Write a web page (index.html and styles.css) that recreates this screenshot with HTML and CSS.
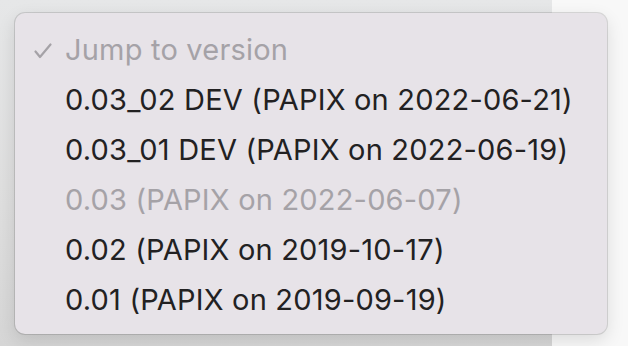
FILE: index.html
```html
<!DOCTYPE html>
<html lang="en">
<head>
  <meta charset="UTF-8">
  <title>Jump to version</title>
  <link rel="stylesheet" href="styles.css">
</head>
<body>
  <div class="backdrop">
    <div class="pane-left"></div>
    <div class="pane-right"></div>
  </div>
  <ul class="menu">
    <li class="item disabled">
      <svg class="check" width="18" height="16" viewBox="0 0 18 16"><path d="M1.5 8.5 L6 14 L16.5 1.5" fill="none" stroke="currentColor" stroke-width="2.2" stroke-linecap="round" stroke-linejoin="round"/></svg>
      Jump to version
    </li>
    <li class="item">0.03_02 DEV (PAPIX on 2022-06-21)</li>
    <li class="item">0.03_01 DEV (PAPIX on 2022-06-19)</li>
    <li class="item disabled">0.03 (PAPIX on 2022-06-07)</li>
    <li class="item">0.02 (PAPIX on 2019-10-17)</li>
    <li class="item">0.01 (PAPIX on 2019-09-19)</li>
  </ul>
</body>
</html>
```

FILE: styles.css
```css
html, body {
  margin: 0;
  height: 100%;
}
body {
  font-family: Inter, 'Noto Sans', sans-serif;
  overflow: hidden;
  position: relative;
}
.backdrop {
  display: flex;
  height: 100%;
}
.pane-left {
  width: 552px;
  background: linear-gradient(180deg, #e6e7e8 0%, #dedede 60%, #d6d6d6 100%);
}
.pane-right {
  flex: 1;
  background: #f8f8f8;
}
.menu {
  position: absolute;
  left: 15px;
  top: 13px;
  width: 592px;
  height: 321px;
  box-sizing: border-box;
  margin: 0;
  padding: 12px 0 9px;
  list-style: none;
  background: #e7e3e8;
  border-radius: 10px;
  box-shadow: 0 0 0 1px rgba(0,0,0,0.12), 0 6px 18px rgba(0,0,0,0.12);
}
.item {
  height: 50px;
  line-height: 50px;
  padding-left: 50px;
  position: relative;
  font-size: 29px;
  letter-spacing: 0.2px;
  color: #222122;
  white-space: nowrap;
}
.item.disabled {
  color: #a5a2a7;
}
.check {
  position: absolute;
  left: 19px;
  top: 18px;
}
```
